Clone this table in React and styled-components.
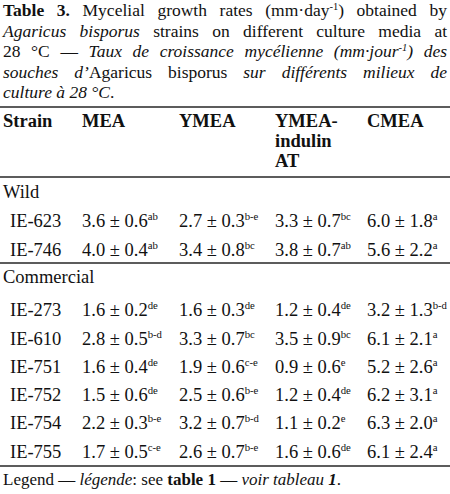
import React from 'react';
import styled, { createGlobalStyle } from 'styled-components';

const GlobalStyle = createGlobalStyle`
  html, body {
    margin: 0;
    padding: 0;
    background: #ffffff;
  }
  body {
    font-family: 'Liberation Serif', 'Times New Roman', serif;
    color: #111111;
  }
`;

const rule = '2px solid #5c5c5c';

const Page = styled.div`
  width: 450px;
  height: 494px;
  overflow: hidden;
`;

const Caption = styled.div`
  padding: 0 3px;
  font-size: 17.5px;
  line-height: 20.5px;
`;

const CaptionLine = styled.div`
  text-align: justify;
  text-align-last: ${({ last }) => (last ? 'left' : 'justify')};
  white-space: nowrap;
`;

const Label = styled.b`
  font-weight: bold;
`;

const Sup = styled.sup`
  font-size: ${({ small }) => (small ? '0.58em' : '0.6em')};
  line-height: 0;
  vertical-align: ${({ small }) => (small ? '0.62em' : '0.55em')};
`;

const Table = styled.table`
  width: 450px;
  margin-top: 3px;
  border-collapse: separate;
  border-spacing: 0;
  table-layout: fixed;
  font-family: 'Liberation Serif', 'Times New Roman', serif;
  font-size: 18.5px;
  line-height: 20px;
  color: #111111;
  border-top: ${rule};
  border-bottom: ${rule};
`;

const HeadCell = styled.th`
  text-align: left;
  vertical-align: top;
  font-weight: bold;
  padding: 3px 0 5px 3px;
  border-bottom: ${rule};
`;

const GroupCell = styled.td`
  padding: ${({ first }) => (first ? '4px 0 5px 3px' : '3px 0 9px 3px')};
  border-top: ${({ first }) => (first ? '0' : rule)};
  white-space: nowrap;
`;

const Cell = styled.td`
  padding: 4.75px 0 ${({ tight }) => (tight ? '2px' : '3.5px')}
    ${({ strain }) => (strain ? '10px' : '3px')};
  white-space: nowrap;
`;

const Legend = styled.div`
  padding: 3px 3px 0;
  font-size: 17px;
  line-height: 20px;
`;

const groups = [
  {
    name: 'Wild',
    rows: [
      ['IE-623', ['3.6 ± 0.6', 'ab'], ['2.7 ± 0.3', 'b-e'], ['3.3 ± 0.7', 'bc'], ['6.0 ± 1.8', 'a']],
      ['IE-746', ['4.0 ± 0.4', 'ab'], ['3.4 ± 0.8', 'bc'], ['3.8 ± 0.7', 'ab'], ['5.6 ± 2.2', 'a']]
    ]
  },
  {
    name: 'Commercial',
    rows: [
      ['IE-273', ['1.6 ± 0.2', 'de'], ['1.6 ± 0.3', 'de'], ['1.2 ± 0.4', 'de'], ['3.2 ± 1.3', 'b-d']],
      ['IE-610', ['2.8 ± 0.5', 'b-d'], ['3.3 ± 0.7', 'bc'], ['3.5 ± 0.9', 'bc'], ['6.1 ± 2.1', 'a']],
      ['IE-751', ['1.6 ± 0.4', 'de'], ['1.9 ± 0.6', 'c-e'], ['0.9 ± 0.6', 'e'], ['5.2 ± 2.6', 'a']],
      ['IE-752', ['1.5 ± 0.6', 'de'], ['2.5 ± 0.6', 'b-e'], ['1.2 ± 0.4', 'de'], ['6.2 ± 3.1', 'a']],
      ['IE-754', ['2.2 ± 0.3', 'b-e'], ['3.2 ± 0.7', 'b-d'], ['1.1 ± 0.2', 'e'], ['6.3 ± 2.0', 'a']],
      ['IE-755', ['1.7 ± 0.5', 'c-e'], ['2.6 ± 0.7', 'b-e'], ['1.6 ± 0.6', 'de'], ['6.1 ± 2.4', 'a']]
    ]
  }
];

const App = () => (
  <Page>
    <GlobalStyle />
    <Caption>
      <CaptionLine>
        <Label>Table 3.</Label> Mycelial growth rates (mm·day<Sup>-1</Sup>) obtained by
      </CaptionLine>
      <CaptionLine>
        <i>Agaricus bisporus</i> strains on different culture media at
      </CaptionLine>
      <CaptionLine>
        28 °C — <i>Taux de croissance mycélienne (mm·jour<Sup>-1</Sup>) des</i>
      </CaptionLine>
      <CaptionLine>
        <i>souches d’</i>Agaricus bisporus <i>sur différents milieux de</i>
      </CaptionLine>
      <CaptionLine last>
        <i>culture à 28 °C</i>.
      </CaptionLine>
    </Caption>

    <Table>
      <colgroup>
        <col style={{ width: 79 }} />
        <col style={{ width: 97 }} />
        <col style={{ width: 96 }} />
        <col style={{ width: 92 }} />
        <col style={{ width: 86 }} />
      </colgroup>
      <thead>
        <tr>
          <HeadCell>Strain</HeadCell>
          <HeadCell>MEA</HeadCell>
          <HeadCell>YMEA</HeadCell>
          <HeadCell>
            YMEA-
            <br />
            indulin
            <br />
            AT
          </HeadCell>
          <HeadCell>CMEA</HeadCell>
        </tr>
      </thead>
      {groups.map((group, g) => (
        <tbody key={group.name}>
          <tr>
            <GroupCell first={g === 0} colSpan={5}>
              {group.name}
            </GroupCell>
          </tr>
          {group.rows.map(([strain, ...values], r) => {
            const tight = g === 0 && r === group.rows.length - 1;
            return (
              <tr key={strain}>
                <Cell strain tight={tight}>
                  {strain}
                </Cell>
                {values.map(([value, letters], c) => (
                  <Cell key={c} tight={tight}>
                    {value}
                    <Sup small>{letters}</Sup>
                  </Cell>
                ))}
              </tr>
            );
          })}
        </tbody>
      ))}
    </Table>

    <Legend>
      Legend — <i>légende</i>: see <b>table 1</b> — <i>voir tableau <b>1</b></i>.
    </Legend>
  </Page>
);

export default App;
